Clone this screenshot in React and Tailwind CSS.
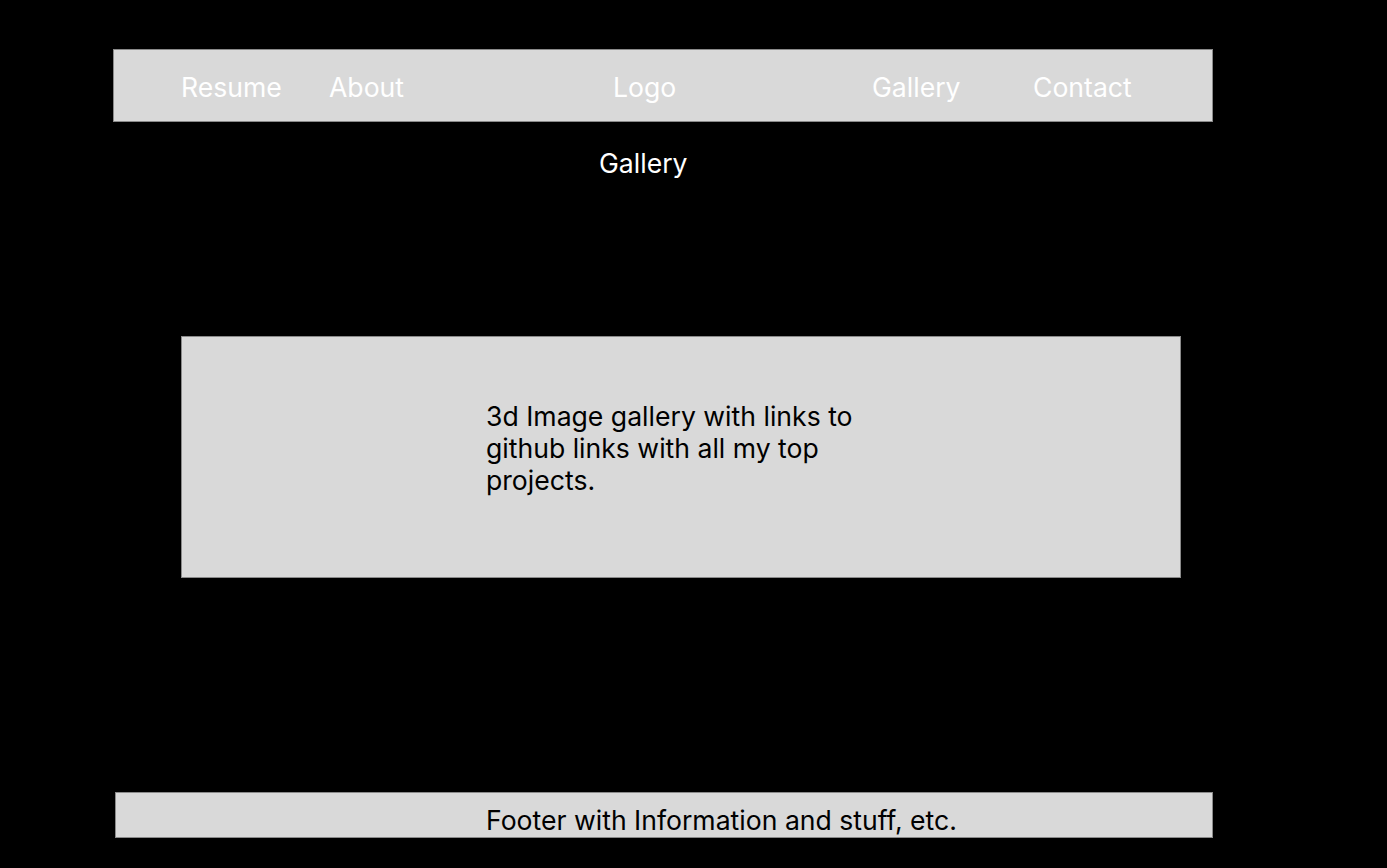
export default function App() {
  const font = { fontFamily: "Inter, 'Noto Sans', sans-serif" };
  return (
    <div className="min-h-[868px] w-full bg-black" style={font}>
      <div className="flex flex-col pt-[49px]">
        <nav className="ml-[113px] flex h-[73px] w-[1100px] items-start border border-[#8a8a8a] bg-[#d9d9d9] pl-[67px] pt-[21px] text-[26.6px] leading-[32px] text-white">
          <span className="w-[148px]">Resume</span>
          <span className="w-[284px]">About</span>
          <span className="w-[259px]">Logo</span>
          <span className="w-[161px]">Gallery</span>
          <span>Contact</span>
        </nav>
        <h1 className="ml-[599px] mt-[25px] text-[26.6px] leading-[32px] font-normal text-white">Gallery</h1>
        <section className="ml-[181px] mt-[157px] h-[242px] w-[1000px] border border-[#8a8a8a] bg-[#d9d9d9] pl-[304px] pt-[63px]">
          <p className="w-[380px] text-[26.6px] leading-[32px] text-black">
            3d Image gallery with links to github links with all my top projects.
          </p>
        </section>
        <footer className="ml-[115px] mt-[214px] h-[46px] w-[1098px] border border-[#8a8a8a] bg-[#d9d9d9] pl-[370px] pt-[11px]">
          <p className="text-[26.6px] leading-[32px] text-black">Footer with Information and stuff, etc.</p>
        </footer>
      </div>
    </div>
  );
}
